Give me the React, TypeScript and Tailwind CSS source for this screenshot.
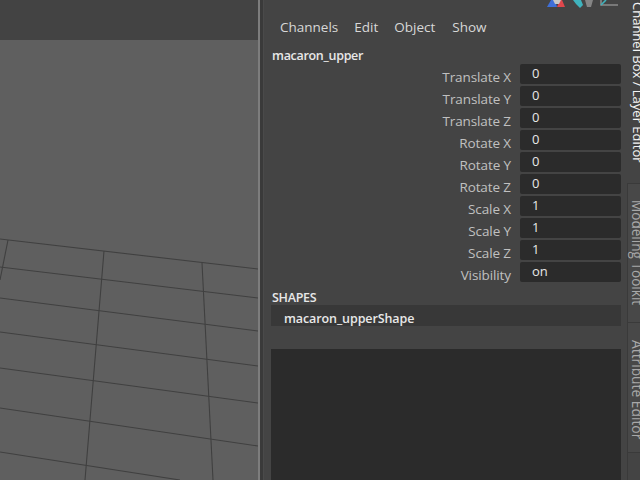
const FONT = "font-['Open_Sans','Liberation_Sans',sans-serif]";

const rows: [string, string][] = [
  ["Translate X", "0"],
  ["Translate Y", "0"],
  ["Translate Z", "0"],
  ["Rotate X", "0"],
  ["Rotate Y", "0"],
  ["Rotate Z", "0"],
  ["Scale X", "1"],
  ["Scale Y", "1"],
  ["Scale Z", "1"],
  ["Visibility", "on"],
];

function Grid() {
  const lines: [number, number, number, number][] = [
    [0, 239, 258, 269],
    [0, 267, 258, 298],
    [0, 298, 258, 331],
    [0, 332, 258, 366],
    [0, 368, 258, 403],
    [0, 408, 258, 446],
    [0, 452, 180, 480],
    [8, 240, 0, 280],
    [104, 251, 85, 480],
    [202, 263, 213, 480],
  ];
  return (
    <svg width="258" height="440" viewBox="0 40 258 440" className="block">
      {lines.map(([a, b, c, d], i) => (
        <line key={i} x1={a} y1={b} x2={c} y2={d} stroke="#404040" strokeWidth="1.1" />
      ))}
    </svg>
  );
}

function Icons() {
  return (
    <svg width="76" height="10" viewBox="0 0 76 10" className="block">
      <path d="M5 0h4l2 7H1z" fill="#3f6fd8" />
      <path d="M14 0h2l3 7h-8z" fill="#e0474c" />
      <path d="M7 0h8l-2 4H9z" fill="#c8c8c8" />
      <path d="M27 0h8l2 5-3 3-4-4z" fill="#3fb3bd" />
      <path d="M39 0h8l-2 7h-4z" fill="#858585" />
      <path d="M55 0v5h17" fill="none" stroke="#8a8a8a" strokeWidth="1.6" />
      <path d="M55 5l5-5" fill="none" stroke="#3fb3bd" strokeWidth="1.6" />
    </svg>
  );
}

export default function App() {
  return (
    <div className={`w-[640px] h-[480px] overflow-hidden flex bg-[#444444] ${FONT}`}>
      <div className="w-[258px] h-full flex flex-col shrink-0">
        <div className="h-[40px] bg-[#434343]" />
        <div className="flex-1 bg-[#5f5f5f]">
          <Grid />
        </div>
      </div>
      <div className="w-[2px] h-full bg-[#7d7d7d]" />
      <div className="w-[3px] h-full bg-[#3a3a3a]" />
      <div className="w-[1px] h-full bg-[#4a4a4a]" />
      <div className="relative w-[358px] flex flex-col pl-[7px] pr-[1px]">
        <div className="absolute left-[282px] top-0"><Icons /></div>
        <div className="flex gap-[16px] pl-[9px] pt-[18px] h-[47px] text-[13.5px] leading-[18px] text-[#d8d8d8]">
          <span>Channels</span>
          <span>Edit</span>
          <span>Object</span>
          <span className="ml-[1px]">Show</span>
        </div>
        <div className="h-[17px] pl-[1px] text-[12.5px] leading-[18px] font-semibold text-[#e8e8e8] tracking-[-0.3px]">macaron_upper</div>
        <div className="flex flex-col gap-[2px]">
          {rows.map(([k, v]) => (
            <div key={k} className="flex h-[20px]">
              <div className="w-[240px] pt-[3px] text-right text-[13.5px] leading-[20px] text-[#c0c0c0] tracking-[-0.1px]">{k}</div>
              <div className="ml-[9px] flex-1 h-[20px] rounded-[2px] bg-[#2b2b2b] pl-[12px] text-[13px] leading-[19px] text-[#e8e8e8]">{v}</div>
            </div>
          ))}
        </div>
        <div className="mt-[4px] h-[19px] pl-[1px] pt-[2px] text-[12.5px] leading-[20px] font-semibold text-[#e8e8e8] tracking-[-0.3px]">SHAPES</div>
        <div className="h-[21px] bg-[#383838] pl-[13px] pt-[3px] text-[12.5px] leading-[21px] font-semibold text-[#e8e8e8] tracking-[-0.1px]">macaron_upperShape</div>
        <div className="mt-[23px] flex-1 bg-[#2b2b2b]" />
      </div>
      <div className="flex-1 flex flex-col min-w-0 overflow-hidden">
        <div className="h-[183px] pl-[9px] pt-[2px]">
          <div className="[writing-mode:vertical-rl] text-[13px] leading-[14px] text-[#f4f4f4] whitespace-nowrap">Channel Box / Layer Editor</div>
        </div>
        <div className="ml-[5px] h-[139px] bg-[#484848] border-t border-l border-[#3a3a3a] pl-[2px] pt-[16px]">
          <div className="[writing-mode:vertical-rl] text-[13.6px] leading-[14px] text-[#a8a8a8] whitespace-nowrap">Modeling Toolkit</div>
        </div>
        <div className="ml-[5px] h-[130px] bg-[#484848] border-t border-l border-[#3a3a3a] pl-[2px] pt-[17px]">
          <div className="[writing-mode:vertical-rl] text-[13.8px] leading-[14px] text-[#a8a8a8] whitespace-nowrap">Attribute Editor</div>
        </div>
        <div className="ml-[5px] flex-1 border-t border-l border-[#3a3a3a]" />
      </div>
    </div>
  );
}
